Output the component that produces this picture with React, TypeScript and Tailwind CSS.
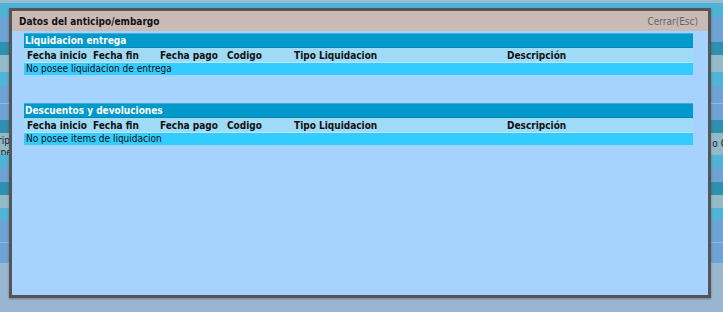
const bgRows = [
  { h: 'h-[3px]', c: 'bg-[#98bcd2]' },
  { h: 'h-[14px]', c: 'bg-[#4eb3d5]' },
  { h: 'h-[25px]', c: 'bg-[#6ca2d4]' },
  { h: 'h-[13px]', c: 'bg-[#2e90ad]' },
  { h: 'h-[17px]', c: 'bg-[#94b9c9]' },
  { h: 'h-[14px]', c: 'bg-[#4fb4d6]' },
  { h: 'h-[17px]', c: 'bg-[#6ca2d4]' },
  { h: 'h-[17px]', c: 'bg-[#6ca2d4] border-t border-[#9ab5cf]' },
  { h: 'h-[13px]', c: 'bg-[#2e90ad]' },
  { h: 'h-[22px]', c: 'bg-[#94b9c9]', text: true },
  { h: 'h-[12px]', c: 'bg-[#4fb4d6]' },
  { h: 'h-[15px]', c: 'bg-[#6ca2d4]' },
  { h: 'h-[13px]', c: 'bg-[#2e90ad]' },
  { h: 'h-[13px]', c: 'bg-[#94b9c9]' },
  { h: 'h-[12px]', c: 'bg-[#4fb4d6]' },
  { h: 'h-[22px]', c: 'bg-[#6ca2d4]' },
  { h: 'h-[21px]', c: 'bg-[#6ca2d4] border-t border-[#9ab5cf]' },
];

const columns = [
  { label: 'Fecha inicio', w: 'w-[66px]' },
  { label: 'Fecha fin', w: 'w-[67px]' },
  { label: 'Fecha pago', w: 'w-[67px]' },
  { label: 'Codigo', w: 'w-[67px]' },
  { label: 'Tipo Liquidacion', w: 'w-[213px]' },
  { label: 'Descripción', w: 'flex-1' },
];

const Section = ({ title, empty }: { title: string; empty: string }) => (
  <div className="flex flex-col">
    <div className="h-[15px] bg-[#0099cc] border-t border-[#3aaed8] border-b border-b-[#0588b5] px-[1px] text-[10px] leading-[13px] font-bold text-white">
      {title}
    </div>
    <div className="flex h-[15px] bg-[#9fdbf7] border-b border-[#b8e6fa] px-[3px] text-[10px] leading-[15px] font-bold text-[#111]">
      {columns.map((col) => (
        <div key={col.label} className={col.w}>
          {col.label}
        </div>
      ))}
    </div>
    <div className="h-[12px] bg-[#33ccff] px-[2px] text-[10px] leading-[12px] text-[#111]">{empty}</div>
  </div>
);

const App = () => {
  return (
    <div
      className="relative w-[723px] h-[312px] overflow-hidden bg-[#9ab5cf]"
      style={{ fontFamily: '"DejaVu Sans Condensed", "DejaVu Sans", sans-serif' }}
    >
      <div className="flex flex-col">
        {bgRows.map((r, i) => (
          <div key={i} className={`${r.h} ${r.c} flex justify-between items-start text-[10px] leading-[12px] text-[#123]`}>
            {r.text ? (
              <>
                <div className="-ml-[2px] flex flex-col pt-[2px]">
                  <span>rip</span>
                  <span>ipe</span>
                </div>
                <span className="pt-[5px] -mr-[4px]">o C</span>
              </>
            ) : null}
          </div>
        ))}
      </div>

      <div className="absolute left-[9px] top-[8px] w-[702px] h-[290px] border-[3px] border-[#555] bg-[#a6d2ff] flex flex-col shadow-[0_1px_2px_rgba(0,0,0,0.3)]">
        <div className="h-[20px] bg-[#c9bab6] flex items-center justify-between pl-[7px] pr-[10px] shrink-0">
          <span className="text-[10px] font-bold text-[#111]">Datos del anticipo/embargo</span>
          <span className="text-[10px] text-[#666]">Cerrar(Esc)</span>
        </div>
        <div className="flex flex-col gap-[28px] pt-[2px] pl-[12px] pr-[15px]">
          <Section title="Liquidacion entrega" empty="No posee liquidacion de entrega" />
          <Section title="Descuentos y devoluciones" empty="No posee items de liquidacion" />
        </div>
      </div>
    </div>
  );
};

export default App;
